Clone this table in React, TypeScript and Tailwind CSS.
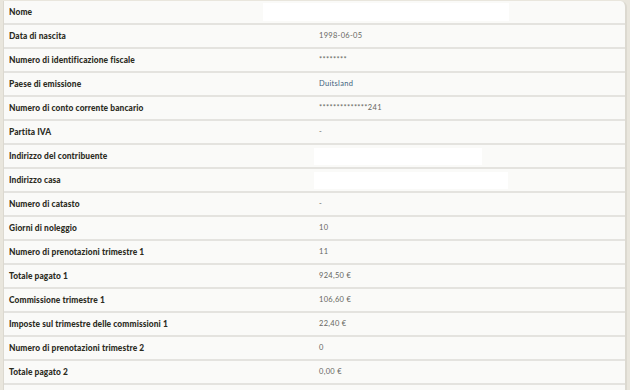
import React from 'react';

interface Row {
    label: string;
    value?: string;
    tone?: string;
    redact?: string;
}

const ROWS: Row[] = [
    { label: 'Nome' },
    { label: 'Data di nascita', value: '1998-06-05' },
    { label: 'Numero di identificazione fiscale', value: '********' },
    { label: 'Paese di emissione', value: 'Duitsland', tone: 'text-[#3f5f7c]' },
    { label: 'Numero di conto corrente bancario', value: '**************241' },
    { label: 'Partita IVA', value: '-' },
    { label: 'Indirizzo del contribuente', redact: 'w-[168px]' },
    { label: 'Indirizzo casa', redact: 'w-[194px]' },
    { label: 'Numero di catasto', value: '-' },
    { label: 'Giorni di noleggio', value: '10' },
    { label: 'Numero di prenotazioni trimestre 1', value: '11' },
    { label: 'Totale pagato 1', value: '924,50 €' },
    { label: 'Commissione trimestre 1', value: '106,60 €' },
    { label: 'Imposte sul trimestre delle commissioni 1', value: '22,40 €' },
    { label: 'Numero di prenotazioni trimestre 2', value: '0' },
    { label: 'Totale pagato 2', value: '0,00 €' },
    { label: '' },
];

const App: React.FC = () => {
    return (
        <div className="w-[630px] h-[390px] overflow-hidden bg-[#e9e6dd] pt-[1px] pl-[3px]" style={{ fontFamily: 'Lato, "Open Sans", sans-serif' }}>
            <div className="w-[624px] bg-[#fafaf8] border-l border-r-2 border-[#dcd9d0] rounded-tr-[6px]">
                {ROWS.map((row, i) => (
                    <div key={i} className="relative flex h-[24px] items-center border-b-2 border-[#e4e3df]">
                        <div className="w-[310px] pl-[5px] text-[8.4px] font-black tracking-[0.1px] text-[#2c2c1e]">{row.label}</div>
                        <div className={`pl-[5px] text-[7.5px] tracking-[0.3px] ${row.tone ?? 'text-[#666661]'}`}>
                            {row.redact ? <div className={`h-[17px] -ml-[5px] bg-white ${row.redact}`} /> : row.value}
                        </div>
                        {i === 0 && <div className="absolute left-[259px] top-[2px] h-[18px] w-[246px] bg-white" />}
                    </div>
                ))}
            </div>
        </div>
    );
};

export default App;
